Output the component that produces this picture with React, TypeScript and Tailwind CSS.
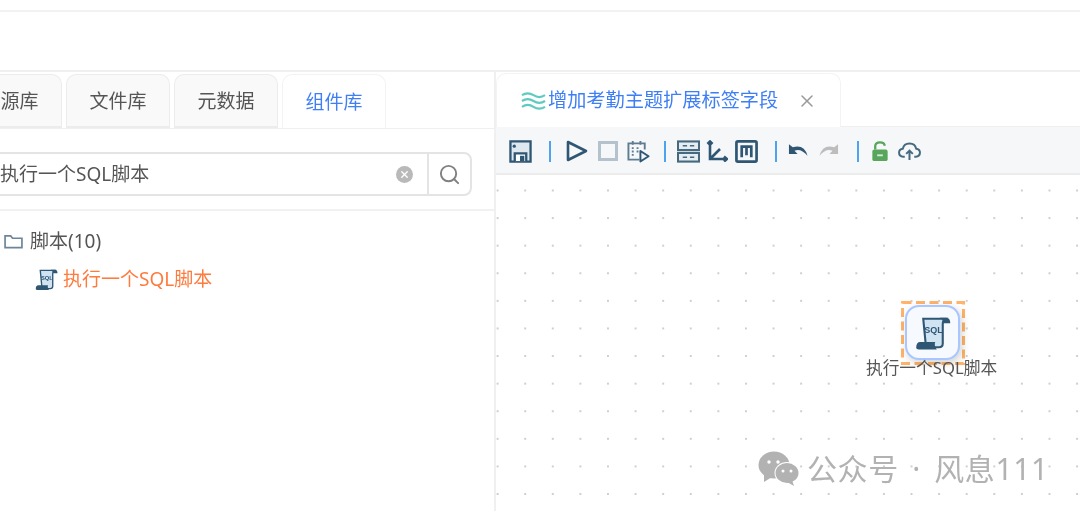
import { Search, X } from "lucide-react";

const font = "font-['Noto_Sans','Noto_Sans_CJK_SC',sans-serif]";
const ink = "#2f5673";

function ScrollIcon({ className }: { className: string }) {
  return (
    <svg viewBox="0 0 24 24" className={className}>
      <path d="M5.5 2.5 H20 Q18.5 3.5 18.5 6 V19 Q18.5 21.5 16 21.5 H6 Q8 20.5 7 18 Z" fill="#cfe3f3" stroke={ink} strokeWidth="1.4" />
      <path d="M16.5 1.8 H21 Q23.5 2 23.5 5.5 H19 Q19 3 16.5 1.8 Z" fill={ink} />
      <path d="M0.8 21.8 Q0.8 18 3.5 18 H13.5 Q12.5 20 14.5 23 H2.5 Q0.8 23 0.8 21.8 Z" fill={ink} />
      <text x="12.4" y="12" textAnchor="middle" fontSize="6" fontWeight="700" fill={ink} fontFamily="Liberation Sans">
        SQL
      </text>
    </svg>
  );
}

function Sep({ ml }: { ml: string }) {
  return <span className={`h-[21px] w-[2px] shrink-0 bg-[#4da3ee] ${ml}`} />;
}

function Toolbar() {
  return (
    <div className="flex h-[48px] shrink-0 items-center border-b-2 border-[#ececec] bg-[#f5f7f9] pl-[13px] pt-[2px]">
      {/* save */}
      <svg viewBox="0 0 24 24" className="h-[23px] w-[23px] shrink-0" fill="none" stroke={ink} strokeWidth="2.4">
        <path d="M1.5 1.5 H22.5 V22.5 H1.5 Z" fill="#dfe8ee" />
        <circle cx="5.5" cy="6.5" r="1.7" fill={ink} stroke="none" />
        <path d="M6 22 V14 H18 V22" fill="#fff" />
        <rect x="11.5" y="16.5" width="4.5" height="5.5" fill={ink} stroke="none" />
      </svg>
      <Sep ml="ml-[17px]" />
      {/* run */}
      <svg viewBox="0 0 22 22" className="ml-[15px] h-[22px] w-[22px] shrink-0" fill="none" stroke={ink} strokeWidth="2.6">
        <path d="M2 2 L20 11 L2 20 Z" strokeLinejoin="round" />
      </svg>
      {/* stop */}
      <span className="ml-[10px] h-[20px] w-[20px] shrink-0 border-[3px] border-[#b4c2cd]" />
      {/* schedule */}
      <svg viewBox="0 0 24 24" className="ml-[9px] h-[23px] w-[23px] shrink-0" fill="none" stroke="#5f7d92" strokeWidth="2">
        <path d="M13 20.5 H1.5 V3.5 H18.5 V10" />
        <path d="M6 1 V5 M14 1 V5" />
        <path d="M5 8.5 H8 M10 8.5 H13 M5 12 H8 M10 12 H12 M5 15.5 H8" strokeDasharray="2 1" />
        <path d="M14 11.5 L22.5 17 L14 22.5 Z" stroke={ink} strokeLinejoin="round" />
      </svg>
      <Sep ml="ml-[14px]" />
      {/* storage */}
      <svg viewBox="0 0 24 24" className="ml-[11px] h-[23px] w-[23px] shrink-0" fill="none" stroke="#47697f" strokeWidth="2.2">
        <rect x="1" y="1.5" width="22" height="9" fill="#e6edf2" />
        <rect x="1" y="13.5" width="22" height="9" fill="#e6edf2" />
        <path d="M6 6 H10.5 M13.5 6 H18 M6 18 H10.5 M13.5 18 H18" strokeWidth="1.6" />
      </svg>
      {/* axes */}
      <svg viewBox="0 0 22 22" className="ml-[6px] h-[22px] w-[22px] shrink-0" fill="none" stroke={ink} strokeWidth="2.6">
        <path d="M4 1.5 V19 H21 M1.5 4 L4 1.5 L6.5 4 M18 16.5 L21 19 L18 21.5 M4 19 L14 9" />
      </svg>
      {/* model */}
      <svg viewBox="0 0 24 24" className="ml-[7px] h-[23px] w-[23px] shrink-0" fill="none" stroke={ink} strokeWidth="2.8">
        <rect x="1.5" y="1.5" width="21" height="21" rx="1.5" />
        <path d="M7 18 V7 H17 V18 M12 7 V16" />
      </svg>
      <Sep ml="ml-[17px]" />
      {/* undo */}
      <svg viewBox="0 0 22 17" className="ml-[11px] h-[17px] w-[21px] shrink-0">
        <path d="M1 1 V11 H10 L6.8 7.8 Q13 4.5 20.5 13 Q17 0.5 5 4 Z" fill={ink} />
      </svg>
      {/* redo */}
      <svg viewBox="0 0 22 17" className="ml-[9px] h-[17px] w-[21px] shrink-0">
        <path d="M21 1 V11 H12 L15.2 7.8 Q9 4.5 1.5 13 Q5 0.5 17 4 Z" fill="#bdbdbd" />
      </svg>
      <Sep ml="ml-[18px]" />
      {/* unlocked */}
      <svg viewBox="0 0 18 22" className="ml-[12px] h-[21px] w-[18px] shrink-0" fill="none">
        <path d="M4 9 V5.5 Q4 1.5 9 1.5 Q13.5 1.5 14 5" stroke="#58a55c" strokeWidth="2.4" />
        <rect x="1" y="9" width="16" height="12" rx="2" fill="#58a55c" />
        <rect x="6" y="14" width="6" height="2" fill="#d5ead6" />
      </svg>
      {/* upload */}
      <svg viewBox="0 0 24 20" className="ml-[9px] h-[19px] w-[23px] shrink-0" fill="none" stroke="#47697f" strokeWidth="2.1">
        <path d="M7 15.5 H5.5 Q1 15 1 11 Q1 7.5 5 7 Q6 1.5 12 1.5 Q18 1.5 19 7 Q23 7.5 23 11 Q23 15 18.5 15.5 H17" />
        <path d="M12 19 V9 M8.5 12.5 L12 9 L15.5 12.5" />
      </svg>
    </div>
  );
}

function LeftTab({ label, className, active }: { label: string; className: string; active?: boolean }) {
  return (
    <div
      className={`flex h-[54px] shrink-0 items-center justify-center rounded-t-[10px] border-x border-t pt-[2px] text-[19px] ${
        active
          ? "-mb-px border-[#f3f3f3] bg-white text-[#3f7ff5]"
          : "border-b-2 border-[#ececec] bg-[#f9f9f9] text-[#555]"
      } ${className}`}
    >
      {label}
    </div>
  );
}

export default function App() {
  return (
    <div className={`h-[511px] w-[1080px] overflow-hidden bg-white blur-[0.5px] ${font}`}>
      <div className="h-[12px] border-b-2 border-[#f2f2f2]" />
      <div className="h-[58px]" />
      <div className="flex h-[441px] border-t-2 border-[#f0f0f0]">
        {/* left panel */}
        <div className="flex w-[496px] shrink-0 flex-col overflow-hidden border-r-2 border-[#f0f0f0]">
          <div className="mt-[2px] flex h-[55px] shrink-0 gap-[4px] border-b border-[#efefef]">
            <LeftTab label="数据源库" className="ml-[-61px] w-[123px]" />
            <LeftTab label="文件库" className="w-[104px]" />
            <LeftTab label="元数据" className="w-[104px]" />
            <LeftTab label="组件库" className="w-[104px]" active />
          </div>
          <div className="h-[82px] shrink-0 border-b-2 border-[#f1f1f1] pt-[23px]">
            <div className="ml-[-20px] flex h-[44px] w-[492px] items-center rounded-lg border-2 border-[#e4e4e4] bg-white">
              <span className="ml-[18px] flex-1 text-[19px] text-[#555]">执行一个SQL脚本</span>
              <span className="mr-[14px] flex h-[17px] w-[17px] items-center justify-center rounded-full bg-[#b9b9b9]">
                <X className="h-[11px] w-[11px] text-white" strokeWidth={3} />
              </span>
              <span className="flex h-full w-[43px] items-center justify-center border-l-2 border-[#e4e4e4]">
                <Search className="h-[23px] w-[23px] text-[#808080]" strokeWidth={2} />
              </span>
            </div>
          </div>
          <div className="flex h-[40px] shrink-0 items-center pl-[4px] pt-[20px]">
            <svg viewBox="0 0 20 16" className="h-[15px] w-[19px]" fill="none" stroke="#6d8599" strokeWidth="1.8">
              <path d="M1 14.5 V2 H7 L9 4.5 H19 V14.5 Z" />
            </svg>
            <span className="ml-[7px] text-[19px] text-[#555]">脚本(10)</span>
          </div>
          <div className="mt-[9px] flex items-center pl-[35px] pt-[5px]">
            <ScrollIcon className="h-[23px] w-[23px]" />
            <span className="ml-[5px] text-[19px] text-[#ff7a3d]">执行一个SQL脚本</span>
          </div>
        </div>

        {/* right panel */}
        <div className="flex min-w-0 flex-1 flex-col">
          <div className="flex h-[55px] shrink-0 border-b border-[#efefef]">
            <div className="-mb-px mt-px flex w-[345px] items-center rounded-t-[10px] border-x border-t border-[#f3f3f3] bg-white pl-[24px]">
              <svg viewBox="0 0 26 20" className="h-[20px] w-[25px] shrink-0" fill="none" stroke="#5fcabf" strokeWidth="2.2">
                <path d="M1 4 Q7 0 13 4 T25 4 M1 10 Q7 6 13 10 T25 10 M1 16 Q7 12 13 16 T25 16" />
              </svg>
              <span className="ml-[2px] text-[19.2px] text-[#3f7ff5]">增加考勤主题扩展标签字段</span>
              <X className="ml-[19px] h-[20px] w-[20px] text-[#999]" strokeWidth={1.8} />
            </div>
          </div>
          <Toolbar />
          <div className="relative flex-1 bg-[radial-gradient(circle,#cfcfcf_0.7px,transparent_1.1px)] bg-[size:27.6px_27.6px] bg-[position:-12.2px_1.7px]">
            {/* node on canvas */}
            <svg viewBox="0 0 64 64" className="absolute left-[405px] top-[126px] h-[64px] w-[64px]" fill="none">
              <rect x="1.5" y="1.5" width="61" height="61" stroke="#ffb469" strokeWidth="3" strokeDasharray="9 4.5" />
            </svg>
            <div className="absolute left-[409px] top-[130px] flex h-[55px] w-[55px] items-center justify-center rounded-[14px] border-2 border-[#a9c6ff] bg-[#f6faff] shadow-[2px_3px_8px_rgba(0,0,0,0.18)]">
              <ScrollIcon className="h-[36px] w-[36px]" />
            </div>
            <div className="absolute left-[370px] top-[180px] whitespace-nowrap text-[16.7px] text-[#555]">执行一个SQL脚本</div>

            {/* watermark */}
            <div className="absolute left-[262px] top-[271px] flex items-center">
              <svg viewBox="0 0 42 36" className="h-[36px] w-[42px]" fill="#b2b2b2">
                <ellipse cx="16" cy="14" rx="15.5" ry="13.5" />
                <path d="M6 23 L6 31 L14 26 Z" />
                <ellipse cx="29" cy="22" rx="12.5" ry="11" fill="#fff" />
                <ellipse cx="29" cy="22" rx="11.5" ry="10" />
                <path d="M34 29 L36 35 L29 31 Z" />
                <circle cx="11" cy="11" r="1.7" fill="#fff" />
                <circle cx="20" cy="11" r="1.7" fill="#fff" />
                <circle cx="25" cy="20" r="1.5" fill="#fff" />
                <circle cx="33" cy="20" r="1.5" fill="#fff" />
              </svg>
              <span className="ml-[7px] whitespace-nowrap text-[30px] tracking-[0.6px] text-[#b2b2b2] [word-spacing:5px]">公众号 · 风息111</span>
            </div>
          </div>
        </div>
      </div>
    </div>
  );
}
